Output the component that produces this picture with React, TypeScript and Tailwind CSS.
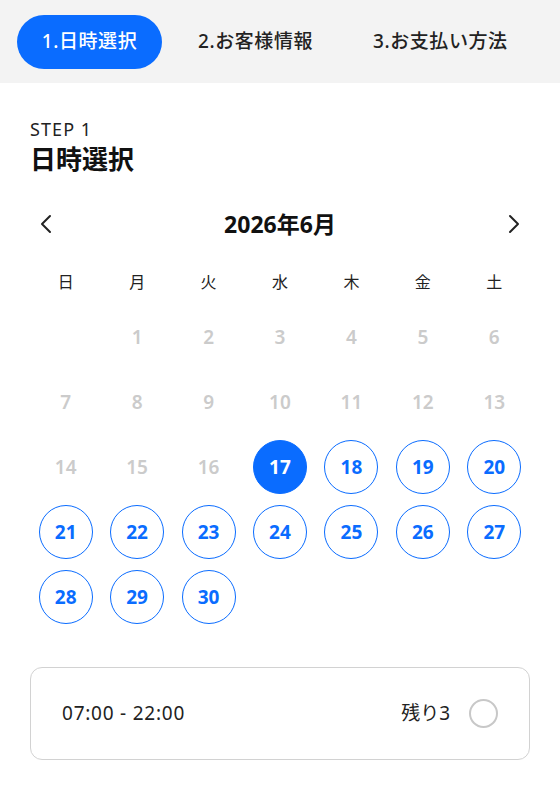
import React from "react";

const font = { fontFamily: '"Noto Sans", "Noto Sans CJK JP", sans-serif' };

const weekdays = ["日", "月", "火", "水", "木", "金", "土"];

function DayCell({ day }: { day: number | null }) {
  if (day === null) return <div className="h-[54px]" />;
  const past = day < 17;
  const selected = day === 17;
  return (
    <div className="flex h-[54px] items-center justify-center">
      {past ? (
        <span className="text-[19px] font-semibold text-[#cbcbcb]">{day}</span>
      ) : (
        <button
          className={`flex h-[54px] w-[54px] items-center justify-center rounded-full border-[1.75px] border-[#0a6cff] text-[19px] font-bold ${
            selected ? "bg-[#0a6cff] text-white" : "bg-white text-[#0a6cff]"
          }`}
        >
          {day}
        </button>
      )}
    </div>
  );
}

export default function App() {
  const cells: (number | null)[] = [null, ...Array.from({ length: 30 }, (_, i) => i + 1)];

  return (
    <div className="min-h-[800px] w-[560px] bg-white text-[#222]" style={font}>
      {/* ステップタブ */}
      <div className="flex h-[83px] items-center bg-[#f3f3f3] px-[17px]">
        <div className="flex h-[54px] w-[145px] items-center justify-center rounded-full bg-[#0a6cff] text-[19px] font-medium tracking-[0.03em] text-white">
          1.日時選択
        </div>
        <div className="ml-[36px] text-[19px] font-medium tracking-[0.03em] text-[#222]">2.お客様情報</div>
        <div className="ml-[60px] text-[19px] font-medium tracking-[0.03em] text-[#222]">3.お支払い方法</div>
      </div>

      <div className="px-[30px]">
        <div className="pt-[35px]">
          <p className="text-[18px] leading-[22px] tracking-[0.06em] text-[#222]">STEP 1</p>
          <h1 className="mt-[2px] text-[26px] font-bold leading-[34px] text-[#111]">日時選択</h1>
        </div>

        {/* 月ナビ */}
        <div className="mt-[30px] flex h-[36px] items-center justify-between px-[10px]">
          <svg width="12" height="20" viewBox="0 0 12 20" fill="none">
            <path d="M10 2 L2 10 L10 18" stroke="#222" strokeWidth="2" strokeLinecap="round" strokeLinejoin="round" />
          </svg>
          <span className="text-[23px] font-bold text-[#111]">2026年6月</span>
          <svg width="12" height="20" viewBox="0 0 12 20" fill="none">
            <path d="M2 2 L10 10 L2 18" stroke="#222" strokeWidth="2" strokeLinecap="round" strokeLinejoin="round" />
          </svg>
        </div>

        {/* 曜日 */}
        <div className="mt-[28px] grid grid-cols-7">
          {weekdays.map((w) => (
            <div key={w} className="flex h-[24px] items-center justify-center text-[16px] text-[#222]">
              {w}
            </div>
          ))}
        </div>

        {/* 日付 */}
        <div className="mt-[16px] grid grid-cols-7 gap-y-[11px]">
          {cells.map((d, i) => (
            <DayCell key={i} day={d} />
          ))}
        </div>

        {/* 時間枠 */}
        <div className="mt-[43px] flex h-[93px] items-center justify-between rounded-[12px] border border-[#d2d2d2] pl-[31px] pr-[31px]">
          <span className="text-[19px] tracking-[0.04em] text-[#222]">07:00 - 22:00</span>
          <div className="flex items-center gap-[19px]">
            <span className="text-[19px] text-[#222]">残り3</span>
            <span className="h-[29px] w-[29px] rounded-full border-2 border-[#c8c8c8]" />
          </div>
        </div>
      </div>
    </div>
  );
}
